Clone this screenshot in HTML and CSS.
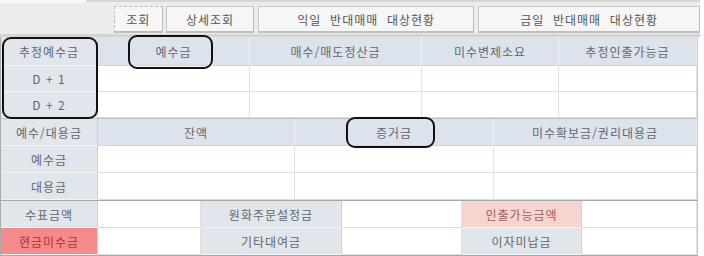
FILE: index.html
```html
<!DOCTYPE html>
<html lang="ko">
<head>
<meta charset="utf-8">
<link rel="stylesheet" href="styles.css">
</head>
<body>
<div class="page">
  <div class="topbar">
    <div class="tab"></div>
    <div class="btns">
      <div class="btn b1">조회</div>
      <div class="btn b2">상세조회</div>
      <div class="btn b3">익일 &nbsp;반대매매 &nbsp;대상현황</div>
      <div class="btn b4">금일 &nbsp;반대매매 &nbsp;대상현황</div>
    </div>
  </div>

  <div class="grid s1">
    <div class="c hd lab">추정예수금</div>
    <div class="c hd">예수금</div>
    <div class="c hd">매수/매도정산금</div>
    <div class="c hd">미수변제소요</div>
    <div class="c hd">추정인출가능금</div>
    <div class="c lab">D + 1</div>
    <div class="c v"></div><div class="c v"></div><div class="c v"></div><div class="c v"></div>
    <div class="c lab">D + 2</div>
    <div class="c v"></div><div class="c v"></div><div class="c v"></div><div class="c v"></div>
  </div>

  <div class="grid s2">
    <div class="c hd lab">예수/대용금</div>
    <div class="c hd">잔액</div>
    <div class="c hd">증거금</div>
    <div class="c hd">미수확보금/권리대용금</div>
    <div class="c lab">예수금</div>
    <div class="c v"></div><div class="c v"></div><div class="c v"></div>
    <div class="c lab">대용금</div>
    <div class="c v"></div><div class="c v"></div><div class="c v"></div>
  </div>

  <div class="grid s3">
    <div class="c lab">수표금액</div>
    <div class="c v"></div>
    <div class="c lab">원화주문설정금</div>
    <div class="c v"></div>
    <div class="c lab pink">인출가능금액</div>
    <div class="c v"></div>
    <div class="c lab red">현금미수금</div>
    <div class="c v"></div>
    <div class="c lab">기타대여금</div>
    <div class="c v"></div>
    <div class="c lab">이자미납금</div>
    <div class="c v"></div>
  </div>

  <div class="mark m1"></div>
  <div class="mark m2"></div>
  <div class="mark m3"></div>
</div>
</body>
</html>
```

FILE: styles.css
```css
* { box-sizing: border-box; }
html, body { margin: 0; padding: 0; background: #ffffff; }
body {
  font-family: "Noto Sans CJK KR", "Noto Sans", sans-serif;
  font-size: 12px;
  color: #62676e;
}
.page {
  position: relative;
  width: 704px;
  height: 256px;
  overflow: hidden;
}
.topbar {
  position: relative;
  height: 37px;
  width: 700px;
  background: #ececec;
  border-top: 2px solid #d6d6d6;
  border-bottom: 3px solid #d4d4d4;
}
.tab {
  position: absolute;
  left: 0;
  top: -2px;
  width: 86px;
  height: 3px;
  background: #f6f6f6;
}
.btns {
  display: flex;
  padding: 4px 0 0 114px;
  gap: 3px;
}
.btn {
  height: 27px;
  display: flex;
  align-items: center;
  justify-content: center;
  background: #f6f6f6;
  border: 1px solid #c9c9c9;
  border-right-color: #b9b9b9;
  border-bottom: 2px solid #bfbfbf;
  letter-spacing: 1px;
  color: #555555;
}
.b1 { width: 49px; border-style: dashed solid solid dashed; border-color: #bdbdbd; }
.b2 { width: 89px; }
.b3 { width: 217px; margin-left: 1px; }
.b4 { width: 223px; margin-left: 1px; }

.grid {
  display: grid;
  width: 698px;
  border-left: 1px solid #a9a9a9;
  border-right: 1px solid #c8c8c8;
}
.s1 {
  grid-template-columns: 97px 152px 172px 137px 138px;
  grid-template-rows: 29px 26px 26px;
  border-bottom: 1px solid #b8bec6;
}
.s2 {
  grid-template-columns: 97px 197px 199px 203px;
  grid-template-rows: 27px 27px 27px;
  border-bottom: 1px solid #a8a8a8;
}
.s3 {
  grid-template-columns: 97px 103px 141px 120px 120px 115px;
  grid-template-rows: 27px 27px;
  border-bottom: 1px solid #a8a8a8;
}
.c {
  display: flex;
  align-items: center;
  justify-content: center;
  border-right: 1px solid #e2e2e2;
  border-bottom: 1px solid #dedede;
  letter-spacing: 1px;
  white-space: nowrap;
}
.hd {
  background: #dde3ec;
  border-right: 1px solid #eef1f5;
  border-bottom: 1px solid #cfd5de;
}
.lab {
  background: #e1e5ec;
  border-right: 1px solid #ccd1d8;
  border-bottom: 1px solid #f2f4f7;
}
.v { background: #ffffff; }
.pink { background: #f6d5cf; color: #a0605a; }
.red { background: #f48a89; color: #b83030; }

.mark {
  position: absolute;
  border: 2.5px solid #111111;
  border-radius: 9px;
}
.m1 { left: 2px; top: 37px; width: 96px; height: 82px; }
.m2 { left: 128px; top: 35px; width: 85px; height: 34px; }
.m3 { left: 346px; top: 117px; width: 89px; height: 31px; }
```
